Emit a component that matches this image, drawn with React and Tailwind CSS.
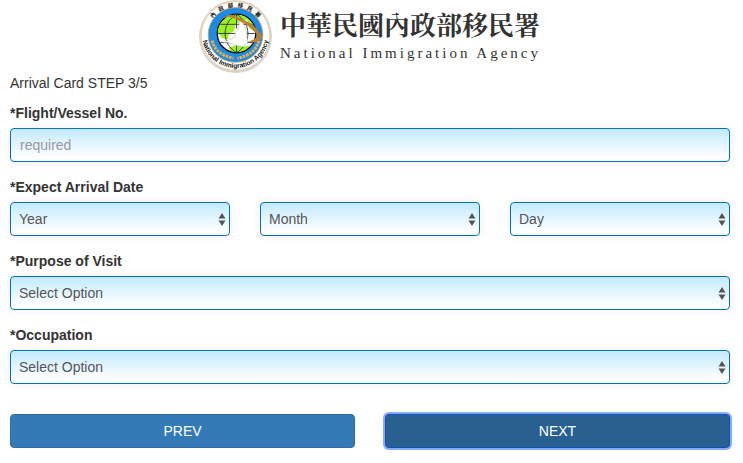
import { useState } from 'react'

const fieldClass = "block w-full h-[34px] rounded border border-[#0074b0] bg-linear-to-b from-[#c3eaff] to-white to-90% text-sm leading-5 shadow-[0_0_10px_rgba(0,0,0,0.07)]"

function Logo() {
  return (
    <svg className="size-[73px] shrink-0" viewBox="0 0 72 72" role="img" aria-label="National Immigration Agency emblem">
      <defs>
        <path id="topArc" d="M 7.5 35.5 A 28.5 28.5 0 0 1 64.5 35.5" />
        <path id="bottomArc" d="M 3 34 A 33 33 0 0 0 69 34" />
        <clipPath id="globe"><circle cx="37" cy="33" r="18.5" /></clipPath>
      </defs>
      <circle cx="36" cy="36" r="36" fill="#d4d4d4" />
      <circle cx="36" cy="35.5" r="34.5" fill="#fff" />
      <circle cx="36" cy="35.5" r="34" fill="none" stroke="#e0b878" strokeWidth="0.8" />
      <circle cx="36" cy="34.5" r="27" fill="#1c8be6" stroke="#d9a04a" strokeWidth="0.8" />
      <g fill="none" stroke="#e8b04c" strokeWidth="3" strokeDasharray="2.6 0.9">
        <path d="M 13 40 C 15 49 22 55 34 57.5" />
        <path d="M 59 40 C 57 49 50 55 38 57.5" />
      </g>
      <circle cx="37" cy="33" r="19" fill="#fff" stroke="#111" strokeWidth="1.3" />
      <g clipPath="url(#globe)">
        <path d="M18 31 C19 23 24 17 31 14 L45 15 L48 19 L41 21 L36 24 L34 31 L30 33 L28 39 L22 37 Z M47 17 L53 22 L55 31 L50 28 Z M29 47 L36 45 L43 46 L50 45 L43 53 L33 52 Z" fill="#9cf01c" />
        <path d="M37 14 V52 M18 33 H56 M21 24 H53 M21 42 H53 M37 14 C22 23 22 43 37 52 M37 14 C52 23 52 43 37 52" fill="none" stroke="#222" strokeWidth="0.8" />
      </g>
      <path d="M35 27 L39 29 L40 20 L44 24 L47 32 L48 42 L44 46 L37 45 L29 42 L24 42 L30 39 L36 36 Z" fill="#fff" stroke="#999" strokeWidth="0.4" />
      <path d="M24 18 C28 13 34 14 39 17 C49 21 59 28 62 36 C61 41 55 43 48 41 C54 40 58 37 57 34 C52 27 43 22 35 18 C31 16 27 17 24 18 Z" fill="#b98032" />
      <text fontSize="5.5" fill="#111" className="font-['Noto_Sans_CJK_TC',sans-serif] font-bold">
        <textPath href="#topArc" startOffset="50%" textAnchor="middle">內 &#160; 政 &#160; 部 &#160; 移 &#160; 民 &#160; 署</textPath>
      </text>
      <text fontSize="6.6" fill="#111" className="font-['Liberation_Sans',sans-serif] font-bold">
        <textPath href="#bottomArc" startOffset="50%" textAnchor="middle">National Immigration Agency</textPath>
      </text>
    </svg>
  )
}

function SelectField({ id, label, placeholder, value, onChange, options }) {
  return (
    <div className="relative">
      <select id={id} aria-label={label} value={value} onChange={onChange} className={`${fieldClass} appearance-none pl-2 pr-6 text-[#555]`}>
        <option value="">{placeholder}</option>
        {options.map(item => <option key={item} value={item}>{item}</option>)}
      </select>
      <svg className="pointer-events-none absolute right-1 top-[11px] h-[13px] w-2" viewBox="0 0 8 13" fill="#555">
        <path d="M4 0 L7.5 5.5 H0.5 Z M4 13 L7.5 7.5 H0.5 Z" />
      </svg>
    </div>
  )
}

function App() {
  const [form, setForm] = useState({ flight: "", year: "", month: "", day: "", purpose: "", occupation: "" })

  const handleChange = (name) => (e) => {
    setForm({ ...form, [name]: e.target.value })
  }

  const years = ["2024", "2025", "2026"]
  const months = Array.from({ length: 12 }, (_, i) => i + 1)
  const days = Array.from({ length: 31 }, (_, i) => i + 1)

  return (
    <div className="bg-white pl-[10px] pr-[13px] pb-[15px] font-['Liberation_Sans',Arial,sans-serif] text-sm leading-5 text-[#333]">
      <header className="flex justify-center gap-2">
        <Logo />
        <div className="pt-[9px]">
          <h1 className="font-['Noto_Serif_CJK_TC','Noto_Sans_CJK_TC',serif] text-[26px] leading-[30px] font-bold">中華民國內政部移民署</h1>
          <p className="pt-1 font-['Liberation_Serif',serif] text-[15px] leading-5 tracking-[3px]">National Immigration Agency</p>
        </div>
      </header>
      <p>Arrival Card STEP 3/5</p>

      <form onSubmit={(e) => e.preventDefault()}>
        <div className="mt-[10px] flex flex-col gap-[15px]">
          <div>
            <label htmlFor="flight" className="mb-[5px] block font-bold">*Flight/Vessel No.</label>
            <input id="flight" type="text" placeholder="required" value={form.flight} onChange={handleChange("flight")} className={`${fieldClass} px-[9px] placeholder:text-[#999]`} />
          </div>
          <div>
            <label htmlFor="year" className="mb-[5px] block font-bold">*Expect Arrival Date</label>
            <div className="grid grid-cols-3 gap-[30px]">
              <SelectField id="year" label="Year" placeholder="Year" value={form.year} onChange={handleChange("year")} options={years} />
              <SelectField id="month" label="Month" placeholder="Month" value={form.month} onChange={handleChange("month")} options={months} />
              <SelectField id="day" label="Day" placeholder="Day" value={form.day} onChange={handleChange("day")} options={days} />
            </div>
          </div>
          <div>
            <label htmlFor="purpose" className="mb-[5px] block font-bold">*Purpose of Visit</label>
            <SelectField id="purpose" placeholder="Select Option" value={form.purpose} onChange={handleChange("purpose")} options={["Business", "Study", "Sightseeing"]} />
          </div>
          <div>
            <label htmlFor="occupation" className="mb-[5px] block font-bold">*Occupation</label>
            <SelectField id="occupation" placeholder="Select Option" value={form.occupation} onChange={handleChange("occupation")} options={["Engineer", "Student", "Teacher"]} />
          </div>
        </div>
        <div className="mt-[30px] grid grid-cols-2 gap-[30px] text-white">
          <button type="button" className="h-[34px] rounded border border-[#2e6da4] bg-[#337ab7]">PREV</button>
          <button type="submit" className="h-[34px] rounded border border-[#1150b8] bg-[#286090] shadow-[0_0_0_2px_#84acf8]">NEXT</button>
        </div>
      </form>
    </div>
  )
}

export default App
